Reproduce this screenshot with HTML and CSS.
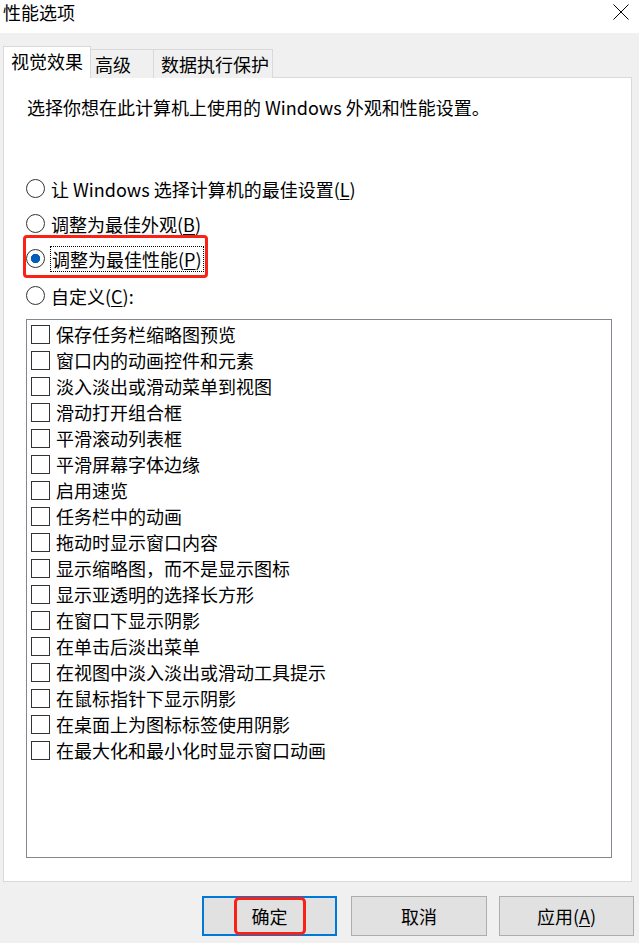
FILE: index.html
```html
<!DOCTYPE html>
<html lang="zh-CN">
<head>
    <meta charset="UTF-8">
    <meta name="viewport" content="width=device-width, initial-scale=1.0">
    <title>性能选项</title>
    <link rel="stylesheet" href="styles.css">
</head>
<body>
    <div class="window">
        <header class="titlebar">
            <span class="title">性能选项</span>
            <svg class="close" width="16" height="16" viewBox="0 0 16 16">
                <path d="M0.5 0.5 L15.5 15.5 M15.5 0.5 L0.5 15.5" stroke="#000" stroke-width="1" fill="none"/>
            </svg>
        </header>

        <div class="content">
            <div class="tabs">
                <div class="tab active">视觉效果</div>
                <div class="tab tab-adv">高级</div>
                <div class="tab tab-dep">数据执行保护</div>
            </div>

            <div class="panel">
                <p class="intro">选择你想在此计算机上使用的 Windows 外观和性能设置。</p>

                <div class="options">
                    <div class="radio-row">
                        <span class="radio"></span>
                        <span class="label">让 Windows 选择计算机的最佳设置(<u>L</u>)</span>
                    </div>
                    <div class="radio-row">
                        <span class="radio"></span>
                        <span class="label">调整为最佳外观(<u>B</u>)</span>
                    </div>
                    <div class="radio-row marked">
                        <span class="radio checked"></span>
                        <span class="label focused">调整为最佳性能(<u>P</u>)</span>
                    </div>
                    <div class="radio-row last">
                        <span class="radio"></span>
                        <span class="label">自定义(<u>C</u>):</span>
                    </div>
                </div>

                <div class="listbox">
                    <div class="check-row"><span class="checkbox"></span>保存任务栏缩略图预览</div>
                    <div class="check-row"><span class="checkbox"></span>窗口内的动画控件和元素</div>
                    <div class="check-row"><span class="checkbox"></span>淡入淡出或滑动菜单到视图</div>
                    <div class="check-row"><span class="checkbox"></span>滑动打开组合框</div>
                    <div class="check-row"><span class="checkbox"></span>平滑滚动列表框</div>
                    <div class="check-row"><span class="checkbox"></span>平滑屏幕字体边缘</div>
                    <div class="check-row"><span class="checkbox"></span>启用速览</div>
                    <div class="check-row"><span class="checkbox"></span>任务栏中的动画</div>
                    <div class="check-row"><span class="checkbox"></span>拖动时显示窗口内容</div>
                    <div class="check-row"><span class="checkbox"></span>显示缩略图，而不是显示图标</div>
                    <div class="check-row"><span class="checkbox"></span>显示亚透明的选择长方形</div>
                    <div class="check-row"><span class="checkbox"></span>在窗口下显示阴影</div>
                    <div class="check-row"><span class="checkbox"></span>在单击后淡出菜单</div>
                    <div class="check-row"><span class="checkbox"></span>在视图中淡入淡出或滑动工具提示</div>
                    <div class="check-row"><span class="checkbox"></span>在鼠标指针下显示阴影</div>
                    <div class="check-row"><span class="checkbox"></span>在桌面上为图标标签使用阴影</div>
                    <div class="check-row"><span class="checkbox"></span>在最大化和最小化时显示窗口动画</div>
                </div>
            </div>

            <div class="buttons">
                <button class="btn btn-default"><span class="marked-text">确定</span></button>
                <button class="btn btn-cancel">取消</button>
                <button class="btn btn-apply">应用(<u>A</u>)</button>
            </div>
        </div>
    </div>
</body>
</html>
```

FILE: styles.css
```css
body {
    margin: 0;
    padding: 0;
    font-family: "Noto Sans CJK SC", "Noto Sans", sans-serif;
    font-size: 18px;
    color: #000;
    background: #f0f0f0;
}

.window {
    width: 639px;
    height: 943px;
    overflow: hidden;
}

/* title bar */
.titlebar {
    height: 33px;
    background: #fff;
    display: flex;
    justify-content: space-between;
    align-items: flex-start;
}

.title {
    padding-left: 3px;
    line-height: 24px;
}

.close {
    margin-top: 4px;
    margin-right: 10px;
}

.content {
    padding: 13px 7px 0 3px;
}

/* tabs */
.tabs {
    display: flex;
    align-items: flex-end;
    height: 32px;
    margin-bottom: -1px;
}

.tab {
    box-sizing: border-box;
    height: 29px;
    line-height: 28px;
    background: #f0f0f0;
    border-top: 1px solid #d9d9d9;
    border-right: 1px solid #d9d9d9;
}

.tab.active {
    position: relative;
    z-index: 1;
    height: 32px;
    padding: 0 7px;
    background: #fff;
    border-left: 1px solid #d9d9d9;
}

.tab-adv {
    padding: 0 22px 0 4px;
}

.tab-dep {
    padding: 0 3px 0 7px;
}

/* panel */
.panel {
    background: #fff;
    border: 1px solid #d9d9d9;
    padding: 16px 19px 23px 22px;
}

.intro {
    margin: 0 0 0 1px;
    line-height: 26px;
}

.options {
    margin-top: 51px;
}

.radio-row {
    position: relative;
    display: flex;
    align-items: center;
    height: 35px;
}

.radio-row.last {
    margin-top: 2px;
}

.radio {
    box-sizing: border-box;
    width: 19px;
    height: 19px;
    border: 1px solid #333;
    border-radius: 50%;
    background: #fff;
    flex: none;
}

.radio.checked {
    background: radial-gradient(circle, #005fb8 0, #005fb8 4.4px, #fff 5px);
}

.label {
    margin-left: 6px;
    line-height: 26px;
}

.label.focused {
    margin-left: 5px;
    padding: 0 1px;
    line-height: 24px;
    border: 1px dotted #000;
}

u {
    text-decoration-thickness: 1px;
    text-underline-offset: 2px;
}

/* red annotation box over the selected option */
.radio-row.marked::after {
    content: "";
    position: absolute;
    left: -3px;
    top: -6px;
    width: 185px;
    height: 43px;
    box-sizing: border-box;
    border: 3px solid #fa2217;
    border-radius: 4px;
}

/* list of effects */
.listbox {
    box-sizing: border-box;
    height: 539px;
    margin-top: 6px;
    border: 1px solid #828790;
    padding: 1px 0 0 4px;
}

.check-row {
    display: flex;
    align-items: center;
    height: 26px;
    gap: 6px;
}

.checkbox {
    box-sizing: border-box;
    width: 19px;
    height: 19px;
    border: 1px solid #333;
    background: #fff;
    flex: none;
}

/* bottom buttons */
.buttons {
    display: flex;
    justify-content: flex-end;
    margin-top: 14px;
    margin-right: -2px;
}

.btn {
    box-sizing: border-box;
    width: 135px;
    height: 40px;
    background: #e1e1e1;
    border: 1px solid #adadad;
    font-family: inherit;
    font-size: 18px;
    color: #000;
    padding: 0;
    display: flex;
    align-items: center;
    justify-content: center;
}

.btn-default {
    border: 2px solid #0078d7;
}

.btn-cancel {
    width: 136px;
    margin-left: 14px;
}

.btn-apply {
    margin-left: 12px;
}

.marked-text {
    display: inline-block;
    box-sizing: border-box;
    height: 38px;
    line-height: 32px;
    padding: 0 15px;
    border: 3px solid #fa2217;
    border-radius: 5px;
}
```
